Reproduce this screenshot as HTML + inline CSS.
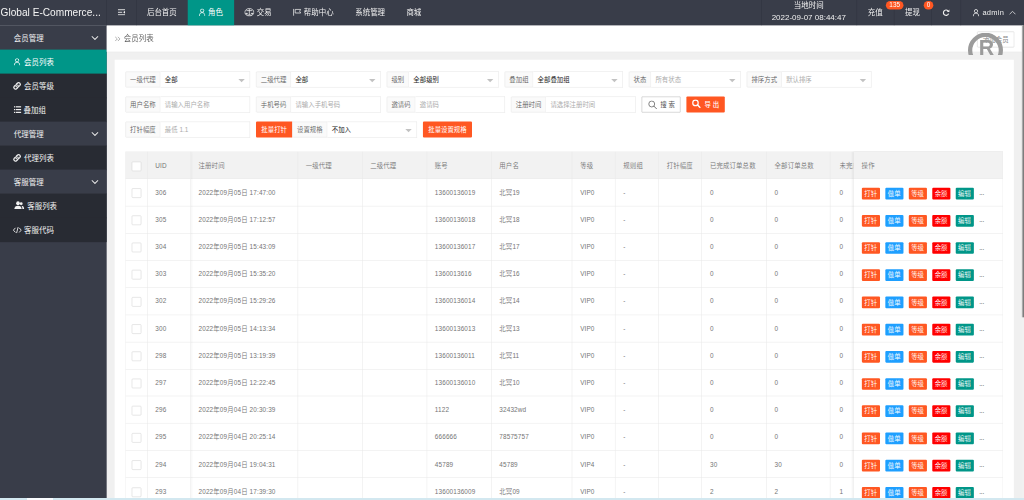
<!DOCTYPE html><html lang="zh-CN"><head><meta charset="utf-8"><title>会员列表</title><style>
*{box-sizing:border-box;margin:0;padding:0}
html,body{width:1024px;height:500px;overflow:hidden;background:#f0f0f0}
body{font-family:"Liberation Sans","Noto Sans CJK SC",sans-serif;position:relative}
#stage{position:absolute;left:0;top:0;width:1920px;height:938px;transform-origin:0 0;transform:scale(0.5333333);overflow:hidden}
#page{position:absolute;left:0;top:-2.75px;width:1920px;height:960px;font-size:14px;color:#666}
.abs{position:absolute}
svg{display:block}
#hdr{position:absolute;left:0;top:0;width:1920px;height:51px;background:#393d49;color:#fff}
#logo{position:absolute;left:1px;top:0;height:50px;line-height:54px;font-size:19px;color:#f4f4f4;white-space:nowrap}
.nav{position:absolute;top:0;height:51px;line-height:54px;font-size:14px;color:#f0f0f0;white-space:nowrap;text-align:center}
.nav .ic{display:inline-block;vertical-align:middle;margin-right:5px;position:relative;top:-3px}
.vline{position:absolute;top:0;width:1px;height:51px;background:#30343f}
.badge{position:absolute;top:5px;height:16px;line-height:16px;border-radius:8px;background:#ff5722;color:#fff;font-size:12px;text-align:center}
#side{position:absolute;left:0;top:51px;width:200px;height:910px;background:#393d49}
.si{position:absolute;left:0;width:200px;height:45.6px;line-height:45px;font-size:14px;color:#f2f2f2;white-space:nowrap}
.si.p{background:#393d49}
.si.ch{background:#282b33}
.si.on{background:#009688;color:#fff}
.si .t{position:absolute;top:0.5px}
.si .ic{position:absolute}
.si .chev{position:absolute;left:171px;top:18.5px;color:#ececec}
#crumb{position:absolute;left:200px;top:51px;width:1716px;height:49px;background:#fff;box-shadow:0 1px 2px rgba(0,0,0,.06)}
#card{position:absolute;left:215px;top:115px;width:1686px;height:900px;background:#fff}
.grp{position:absolute;height:30px;font-size:12px}
.lab{position:absolute;left:0;top:0;height:30px;line-height:30px;border:1px solid #e6e6e6;background:#fafafa;color:#5e5e5e;font-weight:350;text-align:center;border-radius:2px 0 0 2px}
.inp{position:absolute;top:0;height:30px;line-height:30px;border:1px solid #e6e6e6;border-left:none;background:#fff;padding-left:8px;color:#222;white-space:nowrap}
.inp.ph{color:#ababab}
.tri{position:absolute;right:9px;top:13px;width:0;height:0;border:6px solid transparent;border-top-color:#c2c2c2}
.btn{position:absolute;height:30px;line-height:30px;font-size:12px;color:#fff;background:#ff5722;text-align:center;border-radius:2px;white-space:nowrap}
.btn.w{background:#fff;border:1px solid #b8b8b8;color:#555;line-height:28px;border-radius:1px}
#tbl{position:absolute;left:235px;top:287px;width:1646px;height:700px;overflow:hidden;font-size:12px;color:#757575;font-weight:350}
.hrow{position:absolute;left:0;top:0;width:1646px;height:51px;background:#f2f2f2;border-top:1px solid #e6e6e6;border-bottom:1px solid #e6e6e6}
.hl{position:absolute;left:0;width:1646px;height:1px;background:#e9e9e9}
.vl{position:absolute;top:0;width:1px;height:700px;background:#e9e9e9}
.c{position:absolute;white-space:nowrap;line-height:51px;height:50px;letter-spacing:0.25px}
.cb{position:absolute;width:18px;height:18px;border:1px solid #d2d2d2;background:#fff;border-radius:2px}
.xs{position:absolute;height:22px;line-height:22px;width:34px;text-align:center;color:#fff;font-size:12px;border-radius:2px}
</style></head><body><div id="stage"><div id="page">
<div id="side"></div>
<div class="si p" style="top:51px"><span class="t" style="left:26px;top:0.5px">会员管理</span><svg class="chev" width="14" height="8" viewBox="0 0 14 8"><path d="M1 1 L7 7 L13 1" fill="none" stroke="currentColor" stroke-width="1.9"/></svg></div>
<div class="si ch on" style="top:96px"><svg class="ic" style="left:26px;top:16px" width="12" height="14" viewBox="0 0 12 14"><circle cx="6" cy="3.9" r="3.1" fill="none" stroke="currentColor" stroke-width="1.5"/><path d="M0.9 13.8 C0.9 9.4 3 7.6 6 7.6 S11.1 9.4 11.1 13.8" fill="none" stroke="currentColor" stroke-width="1.5"/></svg><span class="t" style="left:45px">会员列表</span></div>
<div class="si ch" style="top:141px"><svg class="ic" style="left:24px;top:15px" width="16" height="16" viewBox="0 0 15 15"><g fill="none" stroke="currentColor" stroke-width="2.2" stroke-linecap="round"><path d="M6.2 8.8 a3 3 0 0 1 0-4.2 l2.2-2.2 a3 3 0 0 1 4.2 4.2 l-1.2 1.2"/><path d="M8.8 6.2 a3 3 0 0 1 0 4.2 l-2.2 2.2 a3 3 0 0 1-4.2-4.2 l1.2-1.2"/></g></svg><span class="t" style="left:45px">会员等级</span></div>
<div class="si ch" style="top:186px"><svg class="ic" style="left:26px;top:15px" width="14" height="15" viewBox="0 0 14 15"><g fill="currentColor"><rect x="0" y="1.2" width="2.4" height="2.2"/><rect x="3.6" y="1.2" width="10.4" height="2.2"/><rect x="0" y="6.4" width="2.4" height="2.2"/><rect x="3.6" y="6.4" width="10.4" height="2.2"/><rect x="0" y="11.6" width="2.4" height="2.2"/><rect x="3.6" y="11.6" width="10.4" height="2.2"/></g></svg><span class="t" style="left:44px">叠加组</span></div>
<div class="si p" style="top:231px"><span class="t" style="left:26px;top:0.5px">代理管理</span><svg class="chev" width="14" height="8" viewBox="0 0 14 8"><path d="M1 1 L7 7 L13 1" fill="none" stroke="currentColor" stroke-width="1.9"/></svg></div>
<div class="si ch" style="top:276px"><svg class="ic" style="left:24px;top:15px" width="16" height="16" viewBox="0 0 15 15"><g fill="none" stroke="currentColor" stroke-width="2.2" stroke-linecap="round"><path d="M6.2 8.8 a3 3 0 0 1 0-4.2 l2.2-2.2 a3 3 0 0 1 4.2 4.2 l-1.2 1.2"/><path d="M8.8 6.2 a3 3 0 0 1 0 4.2 l-2.2 2.2 a3 3 0 0 1-4.2-4.2 l1.2-1.2"/></g></svg><span class="t" style="left:45px">代理列表</span></div>
<div class="si p" style="top:321px"><span class="t" style="left:26px;top:0.5px">客服管理</span><svg class="chev" width="14" height="8" viewBox="0 0 14 8"><path d="M1 1 L7 7 L13 1" fill="none" stroke="currentColor" stroke-width="1.9"/></svg></div>
<div class="si ch" style="top:366px"><svg class="ic" style="left:26px;top:14px" width="20" height="16" viewBox="0 0 18 14" preserveAspectRatio="none"><g fill="currentColor"><circle cx="7" cy="3.6" r="3.1"/><path d="M0.8 13 C0.8 9.5 3.4 7.6 7 7.6 S13.2 9.5 13.2 13 Z"/><circle cx="12.4" cy="4.2" r="2.4"/><path d="M12.4 7.6 C15.6 7.6 17.4 9.6 17.4 13 L14.4 13 C14.4 10.6 13.8 8.8 12.4 7.6Z"/></g></svg><span class="t" style="left:51px">客服列表</span></div>
<div class="si ch" style="top:411px"><svg class="ic" style="left:24px;top:17px" width="17" height="13" viewBox="0 0 15 12" preserveAspectRatio="none"><g fill="none" stroke="currentColor" stroke-width="1.5" stroke-linecap="round" stroke-linejoin="round"><path d="M4 2.5 L1 6 L4 9.5"/><path d="M11 2.5 L14 6 L11 9.5"/><path d="M8.6 1.5 L6.4 10.5"/></g></svg><span class="t" style="left:45px">客服代码</span></div>
<div id="hdr">
<div id="logo">Global E-Commerce...</div>
<div class="abs" style="left:221px;top:20px;color:#f0f0f0"><svg class="ic" width="13.5" height="12" viewBox="0 0 15 13" preserveAspectRatio="none"><g fill="currentColor"><rect x="0" y="0.5" width="15" height="1.8"/><rect x="0" y="5.6" width="9" height="1.8"/><rect x="0" y="10.7" width="15" height="1.8"/><path d="M15 3.6 L11 6.5 L15 9.4Z"/></g></svg></div>
<div class="nav" style="left:255px;width:97px;">后台首页</div>
<div class="nav" style="left:352px;width:87px;background:#009688;color:#fff"><svg class="ic" width="12" height="14" viewBox="0 0 12 14"><circle cx="6" cy="3.9" r="3.1" fill="none" stroke="currentColor" stroke-width="1.5"/><path d="M0.9 13.8 C0.9 9.4 3 7.6 6 7.6 S11.1 9.4 11.1 13.8" fill="none" stroke="currentColor" stroke-width="1.5"/></svg>角色</div>
<div class="nav" style="left:440px;width:87px;"><svg class="ic" width="19" height="16" viewBox="0 0 17 15" preserveAspectRatio="none"><g fill="none" stroke="currentColor" stroke-width="1.3"><ellipse cx="8.5" cy="7.5" rx="7.6" ry="6.6"/><path d="M8.5 1.5 V12.5 M3.5 4.6 H13.5 M5 12.4 H12"/><path d="M2.2 9.2 a1.6 1.6 0 0 0 3.2 0 Z M11.6 9.2 a1.6 1.6 0 0 0 3.2 0 Z" fill="currentColor" stroke-width="0.8"/></g></svg>交易</div>
<div class="nav" style="left:527px;width:120px;"><svg class="ic" width="16" height="14" viewBox="0 0 16 14"><g fill="none" stroke="currentColor" stroke-width="1.4"><path d="M1.5 0.5 V13.5"/><path d="M4.5 1.6 H14.8 L12.8 5 L14.8 8.4 H4.5 Z"/></g></svg>帮助中心</div>
<div class="nav" style="left:646px;width:96px;">系统管理</div>
<div class="nav" style="left:742px;width:68px;">商城</div>
<div class="vline" style="left:199px"></div>
<div class="vline" style="left:255px"></div>
<div class="vline" style="left:1427px"></div>
<div class="vline" style="left:1606px"></div>
<div class="vline" style="left:1676px"></div>
<div class="vline" style="left:1746px"></div>
<div class="vline" style="left:1801px"></div>
<div class="nav" style="left:1427px;width:179px;line-height:24px;top:1px;height:24px">当地时间</div>
<div class="nav" style="left:1427px;width:179px;line-height:24px;top:24px;height:24px;font-size:15px">2022-09-07 08:44:47</div>
<div class="nav" style="left:1606px;width:70px;">充值</div>
<div class="nav" style="left:1676px;width:70px;">提现</div>
<div class="abs" style="left:1767px;top:19.5px;color:#f0f0f0"><svg class="ic" width="14" height="14" viewBox="0 0 14 14"><path d="M11.6 8.6 A5 5 0 1 1 10.4 3.2" fill="none" stroke="currentColor" stroke-width="2.2"/><path d="M8.2 5.6 L13.2 5.6 L13.2 0.6 Z" fill="currentColor"/></svg></div>
<div class="abs" style="left:1824px;top:19.5px;color:#f0f0f0"><svg class="ic" width="12" height="14" viewBox="0 0 12 14"><circle cx="6" cy="3.9" r="3.1" fill="none" stroke="currentColor" stroke-width="1.5"/><path d="M0.9 13.8 C0.9 9.4 3 7.6 6 7.6 S11.1 9.4 11.1 13.8" fill="none" stroke="currentColor" stroke-width="1.5"/></svg></div>
<div class="nav" style="left:1842px;letter-spacing:0.5px">admin</div>
<div class="abs" style="left:1892px;top:23px;color:#f0f0f0"><svg class="chevup" width="13" height="8" viewBox="0 0 14 8"><path d="M1 7 L7 1 L13 7" fill="none" stroke="currentColor" stroke-width="1.5"/></svg></div>
<div class="badge" style="left:1661px;width:33px">135</div>
<div class="badge" style="left:1732px;width:18px">0</div>
</div>
<div id="crumb">
<div class="abs" style="left:15px;top:19.5px;color:#777"><svg class="ic" width="11" height="10" viewBox="0 0 11 10"><path d="M1 1 L5 5 L1 9 M6 1 L10 5 L6 9" fill="none" stroke="currentColor" stroke-width="1.1"/></svg></div>
<div class="abs" style="left:32px;top:0;line-height:48px;font-size:14px;color:#666">会员列表</div>
<div class="abs" style="left:1632px;top:11px;width:70px;height:30px;line-height:29px;border:1px solid #d2d2d2;border-radius:2px;font-size:12px;color:#888;text-align:center;background:#fff">添加会员</div>
</div>
<div class="abs" style="left:1805px;top:55px;width:90px;height:51px;overflow:hidden"><svg width="90" height="90" viewBox="0 0 90 90"><circle cx="42.8" cy="42.4" r="28.8" fill="none" stroke="#9b9b9b" stroke-width="8"/><text x="44.5" y="52" text-anchor="middle" font-family="Liberation Sans, sans-serif" font-weight="bold" font-size="40" fill="#9b9b9b">R</text></svg></div>
<div id="card"></div>
<div class="grp" style="left:235px;top:136.5px;width:234px"><div class="lab" style="width:66px">一级代理</div><div class="inp" style="left:66px;width:168px">全部<i class="tri"></i></div></div>
<div class="grp" style="left:480px;top:136.5px;width:234px"><div class="lab" style="width:66px">二级代理</div><div class="inp" style="left:66px;width:168px">全部<i class="tri"></i></div></div>
<div class="grp" style="left:725px;top:136.5px;width:210px"><div class="lab" style="width:42px">级别</div><div class="inp" style="left:42px;width:168px">全部级别<i class="tri"></i></div></div>
<div class="grp" style="left:946px;top:136.5px;width:222px"><div class="lab" style="width:54px">叠加组</div><div class="inp" style="left:54px;width:168px">全部叠加组<i class="tri"></i></div></div>
<div class="grp" style="left:1179px;top:136.5px;width:210px"><div class="lab" style="width:42px">状态</div><div class="inp ph" style="left:42px;width:168px">所有状态<i class="tri"></i></div></div>
<div class="grp" style="left:1400px;top:136.5px;width:234px"><div class="lab" style="width:66px">排序方式</div><div class="inp ph" style="left:66px;width:168px">默认排序<i class="tri"></i></div></div>
<div class="grp" style="left:235px;top:183.5px;width:234px"><div class="lab" style="width:66px">用户名称</div><div class="inp ph" style="left:66px;width:168px">请输入用户名称</div></div>
<div class="grp" style="left:480px;top:183.5px;width:234px"><div class="lab" style="width:66px">手机号码</div><div class="inp ph" style="left:66px;width:168px">请输入手机号码</div></div>
<div class="grp" style="left:725px;top:183.5px;width:222px"><div class="lab" style="width:54px">邀请码</div><div class="inp ph" style="left:54px;width:168px">邀请码</div></div>
<div class="grp" style="left:958px;top:183.5px;width:234px"><div class="lab" style="width:66px">注册时间</div><div class="inp ph" style="left:66px;width:168px">请选择注册时间</div></div>
<div class="btn w" style="left:1203px;top:183.5px;width:73px"><svg class="ic" style="position:absolute;left:10.5px;top:6.5px;color:#666" width="17" height="17" viewBox="0 0 16 16"><circle cx="6.6" cy="6.6" r="5.2" fill="none" stroke="currentColor" stroke-width="1.4"/><path d="M10.4 10.4 L15 15" stroke="currentColor" stroke-width="1.6" stroke-linecap="round"/></svg><span style="position:absolute;left:34px;letter-spacing:3.5px;top:1px">搜索</span></div>
<div class="btn" style="left:1287px;top:183.5px;width:72px"><svg class="ic" style="position:absolute;left:10px;top:5px" width="17" height="17" viewBox="0 0 16 16"><circle cx="6.6" cy="6.6" r="4.8" fill="none" stroke="currentColor" stroke-width="2.2"/><path d="M10.4 10.4 L14.6 14.6" stroke="currentColor" stroke-width="2.6" stroke-linecap="round"/></svg><span style="position:absolute;left:34px;letter-spacing:3.5px;top:0.5px;font-weight:500">导出</span></div>
<div class="grp" style="left:235px;top:230.5px;width:234px"><div class="lab" style="width:66px">打针幅度</div><div class="inp ph" style="left:66px;width:168px">最低 1.1</div></div>
<div class="btn" style="left:480px;top:230.5px;width:68px;border-radius:2px 0 0 2px">批量打针</div>
<div class="grp" style="left:548px;top:230.5px;width:234px"><div class="lab" style="width:66px">设置规格</div><div class="inp" style="left:66px;width:168px">不加入<i class="tri"></i></div></div>
<div class="btn" style="left:793px;top:230.5px;width:92px">批量设置规格</div>
<div id="tbl">
<div class="hrow"></div>
<div class="hl" style="top:101.7px"></div>
<div class="hl" style="top:152.63px"></div>
<div class="hl" style="top:203.56px"></div>
<div class="hl" style="top:254.49px"></div>
<div class="hl" style="top:305.42px"></div>
<div class="hl" style="top:356.35px"></div>
<div class="hl" style="top:407.28px"></div>
<div class="hl" style="top:458.21px"></div>
<div class="hl" style="top:509.14px"></div>
<div class="hl" style="top:560.07px"></div>
<div class="hl" style="top:611px"></div>
<div class="hl" style="top:661.93px"></div>
<div class="hl" style="top:712.86px"></div>
<div class="vl" style="left:40.5px"></div>
<div class="vl" style="left:121.5px"></div>
<div class="vl" style="left:322.5px"></div>
<div class="vl" style="left:443.5px"></div>
<div class="vl" style="left:564.5px"></div>
<div class="vl" style="left:685.5px"></div>
<div class="vl" style="left:837px"></div>
<div class="vl" style="left:918px"></div>
<div class="vl" style="left:999.2px"></div>
<div class="vl" style="left:1080.4px"></div>
<div class="vl" style="left:1201.6px"></div>
<div class="vl" style="left:1321.2px"></div>
<div class="vl" style="left:0"></div>
<div class="cb" style="left:11.5px;top:18.5px"></div>
<div class="c" style="left:56.25px;top:2px;">UID</div>
<div class="c" style="left:137.25px;top:2px;">注册时间</div>
<div class="c" style="left:338.25px;top:2px;">一级代理</div>
<div class="c" style="left:459.25px;top:2px;">二级代理</div>
<div class="c" style="left:580.25px;top:2px;">账号</div>
<div class="c" style="left:701.25px;top:2px;">用户名</div>
<div class="c" style="left:852.75px;top:2px;">等级</div>
<div class="c" style="left:933.75px;top:2px;">规则组</div>
<div class="c" style="left:1014.95px;top:2px;">打针幅度</div>
<div class="c" style="left:1096.15px;top:2px;">已完成订单总数</div>
<div class="c" style="left:1217.35px;top:2px;">全部订单总数</div>
<div class="c" style="left:1336.95px;top:2px;width:26px;overflow:hidden;margin-left:2px;">未完成订单</div>
<div class="cb" style="left:11.5px;top:68.5px"></div>
<div class="c" style="left:56.25px;top:52px">306</div>
<div class="c" style="left:137.25px;top:52px">2022年09月05日 17:47:00</div>
<div class="c" style="left:580.25px;top:52px">13600136019</div>
<div class="c" style="left:701.25px;top:52px">北冥19</div>
<div class="c" style="left:852.75px;top:52px">VIP0</div>
<div class="c" style="left:933.75px;top:52px">-</div>
<div class="c" style="left:1096.15px;top:52px">0</div>
<div class="c" style="left:1217.35px;top:52px">0</div>
<div class="c" style="left:1338.95px;top:52px">0</div>
<div class="cb" style="left:11.5px;top:119.5px"></div>
<div class="c" style="left:56.25px;top:103px">305</div>
<div class="c" style="left:137.25px;top:103px">2022年09月05日 17:12:57</div>
<div class="c" style="left:580.25px;top:103px">13600136018</div>
<div class="c" style="left:701.25px;top:103px">北冥18</div>
<div class="c" style="left:852.75px;top:103px">VIP0</div>
<div class="c" style="left:933.75px;top:103px">-</div>
<div class="c" style="left:1096.15px;top:103px">0</div>
<div class="c" style="left:1217.35px;top:103px">0</div>
<div class="c" style="left:1338.95px;top:103px">0</div>
<div class="cb" style="left:11.5px;top:170.5px"></div>
<div class="c" style="left:56.25px;top:154px">304</div>
<div class="c" style="left:137.25px;top:154px">2022年09月05日 15:43:09</div>
<div class="c" style="left:580.25px;top:154px">13600136017</div>
<div class="c" style="left:701.25px;top:154px">北冥17</div>
<div class="c" style="left:852.75px;top:154px">VIP0</div>
<div class="c" style="left:933.75px;top:154px">-</div>
<div class="c" style="left:1096.15px;top:154px">0</div>
<div class="c" style="left:1217.35px;top:154px">0</div>
<div class="c" style="left:1338.95px;top:154px">0</div>
<div class="cb" style="left:11.5px;top:221.5px"></div>
<div class="c" style="left:56.25px;top:205px">303</div>
<div class="c" style="left:137.25px;top:205px">2022年09月05日 15:35:20</div>
<div class="c" style="left:580.25px;top:205px">1360013616</div>
<div class="c" style="left:701.25px;top:205px">北冥16</div>
<div class="c" style="left:852.75px;top:205px">VIP0</div>
<div class="c" style="left:933.75px;top:205px">-</div>
<div class="c" style="left:1096.15px;top:205px">0</div>
<div class="c" style="left:1217.35px;top:205px">0</div>
<div class="c" style="left:1338.95px;top:205px">0</div>
<div class="cb" style="left:11.5px;top:272.5px"></div>
<div class="c" style="left:56.25px;top:256px">302</div>
<div class="c" style="left:137.25px;top:256px">2022年09月05日 15:29:26</div>
<div class="c" style="left:580.25px;top:256px">13600136014</div>
<div class="c" style="left:701.25px;top:256px">北冥14</div>
<div class="c" style="left:852.75px;top:256px">VIP0</div>
<div class="c" style="left:933.75px;top:256px">-</div>
<div class="c" style="left:1096.15px;top:256px">0</div>
<div class="c" style="left:1217.35px;top:256px">0</div>
<div class="c" style="left:1338.95px;top:256px">0</div>
<div class="cb" style="left:11.5px;top:323.5px"></div>
<div class="c" style="left:56.25px;top:307px">300</div>
<div class="c" style="left:137.25px;top:307px">2022年09月05日 14:13:34</div>
<div class="c" style="left:580.25px;top:307px">13600136013</div>
<div class="c" style="left:701.25px;top:307px">北冥13</div>
<div class="c" style="left:852.75px;top:307px">VIP0</div>
<div class="c" style="left:933.75px;top:307px">-</div>
<div class="c" style="left:1096.15px;top:307px">0</div>
<div class="c" style="left:1217.35px;top:307px">0</div>
<div class="c" style="left:1338.95px;top:307px">0</div>
<div class="cb" style="left:11.5px;top:374.5px"></div>
<div class="c" style="left:56.25px;top:358px">298</div>
<div class="c" style="left:137.25px;top:358px">2022年09月05日 13:19:39</div>
<div class="c" style="left:580.25px;top:358px">13600136011</div>
<div class="c" style="left:701.25px;top:358px">北冥11</div>
<div class="c" style="left:852.75px;top:358px">VIP0</div>
<div class="c" style="left:933.75px;top:358px">-</div>
<div class="c" style="left:1096.15px;top:358px">0</div>
<div class="c" style="left:1217.35px;top:358px">0</div>
<div class="c" style="left:1338.95px;top:358px">0</div>
<div class="cb" style="left:11.5px;top:425.5px"></div>
<div class="c" style="left:56.25px;top:409px">297</div>
<div class="c" style="left:137.25px;top:409px">2022年09月05日 12:22:45</div>
<div class="c" style="left:580.25px;top:409px">13600136010</div>
<div class="c" style="left:701.25px;top:409px">北冥10</div>
<div class="c" style="left:852.75px;top:409px">VIP0</div>
<div class="c" style="left:933.75px;top:409px">-</div>
<div class="c" style="left:1096.15px;top:409px">0</div>
<div class="c" style="left:1217.35px;top:409px">0</div>
<div class="c" style="left:1338.95px;top:409px">0</div>
<div class="cb" style="left:11.5px;top:476.5px"></div>
<div class="c" style="left:56.25px;top:460px">296</div>
<div class="c" style="left:137.25px;top:460px">2022年09月04日 20:30:39</div>
<div class="c" style="left:580.25px;top:460px">1122</div>
<div class="c" style="left:701.25px;top:460px">32432wd</div>
<div class="c" style="left:852.75px;top:460px">VIP0</div>
<div class="c" style="left:933.75px;top:460px">-</div>
<div class="c" style="left:1096.15px;top:460px">0</div>
<div class="c" style="left:1217.35px;top:460px">0</div>
<div class="c" style="left:1338.95px;top:460px">0</div>
<div class="cb" style="left:11.5px;top:527.5px"></div>
<div class="c" style="left:56.25px;top:511px">295</div>
<div class="c" style="left:137.25px;top:511px">2022年09月04日 20:25:14</div>
<div class="c" style="left:580.25px;top:511px">666666</div>
<div class="c" style="left:701.25px;top:511px">78575757</div>
<div class="c" style="left:852.75px;top:511px">VIP0</div>
<div class="c" style="left:933.75px;top:511px">-</div>
<div class="c" style="left:1096.15px;top:511px">0</div>
<div class="c" style="left:1217.35px;top:511px">0</div>
<div class="c" style="left:1338.95px;top:511px">0</div>
<div class="cb" style="left:11.5px;top:578.5px"></div>
<div class="c" style="left:56.25px;top:562px">294</div>
<div class="c" style="left:137.25px;top:562px">2022年09月04日 19:04:31</div>
<div class="c" style="left:580.25px;top:562px">45789</div>
<div class="c" style="left:701.25px;top:562px">45789</div>
<div class="c" style="left:852.75px;top:562px">VIP4</div>
<div class="c" style="left:933.75px;top:562px">-</div>
<div class="c" style="left:1096.15px;top:562px">30</div>
<div class="c" style="left:1217.35px;top:562px">30</div>
<div class="c" style="left:1338.95px;top:562px">0</div>
<div class="cb" style="left:11.5px;top:629.5px"></div>
<div class="c" style="left:56.25px;top:613px">293</div>
<div class="c" style="left:137.25px;top:613px">2022年09月04日 17:39:30</div>
<div class="c" style="left:580.25px;top:613px">13600136009</div>
<div class="c" style="left:701.25px;top:613px">北冥09</div>
<div class="c" style="left:852.75px;top:613px">VIP0</div>
<div class="c" style="left:933.75px;top:613px">-</div>
<div class="c" style="left:1096.15px;top:613px">2</div>
<div class="c" style="left:1217.35px;top:613px">2</div>
<div class="c" style="left:1338.95px;top:613px">1</div>
<div class="abs" style="left:1365.5px;top:0;width:280.5px;height:700px;background:#fff;box-shadow:-2px 0 5px rgba(0,0,0,.10)"></div>
<div class="abs" style="left:1365.5px;top:0;width:280.5px;height:51px;background:#f2f2f2;border-top:1px solid #e6e6e6;border-bottom:1px solid #e6e6e6"></div>
<div class="c" style="left:1380.5px;top:2px">操作</div>
<div class="vl" style="left:1645px"></div>
<div class="hl" style="left:1365.5px;width:280.5px;top:101.7px"></div>
<div class="xs" style="left:1380.5px;top:67.3px;background:#ff5722">打针</div>
<div class="xs" style="left:1424.5px;top:67.3px;background:#1e9fff">做单</div>
<div class="xs" style="left:1468.5px;top:67.3px;background:#ff5722">等级</div>
<div class="xs" style="left:1512.5px;top:67.3px;background:#f00">余额</div>
<div class="xs" style="left:1556.5px;top:67.3px;background:#009688">编辑</div>
<div class="c" style="left:1601px;top:53px;color:#444;letter-spacing:-0.2px;font-weight:400">...</div>
<div class="hl" style="left:1365.5px;width:280.5px;top:152.63px"></div>
<div class="xs" style="left:1380.5px;top:118.3px;background:#ff5722">打针</div>
<div class="xs" style="left:1424.5px;top:118.3px;background:#1e9fff">做单</div>
<div class="xs" style="left:1468.5px;top:118.3px;background:#ff5722">等级</div>
<div class="xs" style="left:1512.5px;top:118.3px;background:#f00">余额</div>
<div class="xs" style="left:1556.5px;top:118.3px;background:#009688">编辑</div>
<div class="c" style="left:1601px;top:104px;color:#444;letter-spacing:-0.2px;font-weight:400">...</div>
<div class="hl" style="left:1365.5px;width:280.5px;top:203.56px"></div>
<div class="xs" style="left:1380.5px;top:169.3px;background:#ff5722">打针</div>
<div class="xs" style="left:1424.5px;top:169.3px;background:#1e9fff">做单</div>
<div class="xs" style="left:1468.5px;top:169.3px;background:#ff5722">等级</div>
<div class="xs" style="left:1512.5px;top:169.3px;background:#f00">余额</div>
<div class="xs" style="left:1556.5px;top:169.3px;background:#009688">编辑</div>
<div class="c" style="left:1601px;top:155px;color:#444;letter-spacing:-0.2px;font-weight:400">...</div>
<div class="hl" style="left:1365.5px;width:280.5px;top:254.49px"></div>
<div class="xs" style="left:1380.5px;top:220.3px;background:#ff5722">打针</div>
<div class="xs" style="left:1424.5px;top:220.3px;background:#1e9fff">做单</div>
<div class="xs" style="left:1468.5px;top:220.3px;background:#ff5722">等级</div>
<div class="xs" style="left:1512.5px;top:220.3px;background:#f00">余额</div>
<div class="xs" style="left:1556.5px;top:220.3px;background:#009688">编辑</div>
<div class="c" style="left:1601px;top:206px;color:#444;letter-spacing:-0.2px;font-weight:400">...</div>
<div class="hl" style="left:1365.5px;width:280.5px;top:305.42px"></div>
<div class="xs" style="left:1380.5px;top:271.3px;background:#ff5722">打针</div>
<div class="xs" style="left:1424.5px;top:271.3px;background:#1e9fff">做单</div>
<div class="xs" style="left:1468.5px;top:271.3px;background:#ff5722">等级</div>
<div class="xs" style="left:1512.5px;top:271.3px;background:#f00">余额</div>
<div class="xs" style="left:1556.5px;top:271.3px;background:#009688">编辑</div>
<div class="c" style="left:1601px;top:257px;color:#444;letter-spacing:-0.2px;font-weight:400">...</div>
<div class="hl" style="left:1365.5px;width:280.5px;top:356.35px"></div>
<div class="xs" style="left:1380.5px;top:322.3px;background:#ff5722">打针</div>
<div class="xs" style="left:1424.5px;top:322.3px;background:#1e9fff">做单</div>
<div class="xs" style="left:1468.5px;top:322.3px;background:#ff5722">等级</div>
<div class="xs" style="left:1512.5px;top:322.3px;background:#f00">余额</div>
<div class="xs" style="left:1556.5px;top:322.3px;background:#009688">编辑</div>
<div class="c" style="left:1601px;top:308px;color:#444;letter-spacing:-0.2px;font-weight:400">...</div>
<div class="hl" style="left:1365.5px;width:280.5px;top:407.28px"></div>
<div class="xs" style="left:1380.5px;top:373.3px;background:#ff5722">打针</div>
<div class="xs" style="left:1424.5px;top:373.3px;background:#1e9fff">做单</div>
<div class="xs" style="left:1468.5px;top:373.3px;background:#ff5722">等级</div>
<div class="xs" style="left:1512.5px;top:373.3px;background:#f00">余额</div>
<div class="xs" style="left:1556.5px;top:373.3px;background:#009688">编辑</div>
<div class="c" style="left:1601px;top:359px;color:#444;letter-spacing:-0.2px;font-weight:400">...</div>
<div class="hl" style="left:1365.5px;width:280.5px;top:458.21px"></div>
<div class="xs" style="left:1380.5px;top:424.3px;background:#ff5722">打针</div>
<div class="xs" style="left:1424.5px;top:424.3px;background:#1e9fff">做单</div>
<div class="xs" style="left:1468.5px;top:424.3px;background:#ff5722">等级</div>
<div class="xs" style="left:1512.5px;top:424.3px;background:#f00">余额</div>
<div class="xs" style="left:1556.5px;top:424.3px;background:#009688">编辑</div>
<div class="c" style="left:1601px;top:410px;color:#444;letter-spacing:-0.2px;font-weight:400">...</div>
<div class="hl" style="left:1365.5px;width:280.5px;top:509.14px"></div>
<div class="xs" style="left:1380.5px;top:475.3px;background:#ff5722">打针</div>
<div class="xs" style="left:1424.5px;top:475.3px;background:#1e9fff">做单</div>
<div class="xs" style="left:1468.5px;top:475.3px;background:#ff5722">等级</div>
<div class="xs" style="left:1512.5px;top:475.3px;background:#f00">余额</div>
<div class="xs" style="left:1556.5px;top:475.3px;background:#009688">编辑</div>
<div class="c" style="left:1601px;top:461px;color:#444;letter-spacing:-0.2px;font-weight:400">...</div>
<div class="hl" style="left:1365.5px;width:280.5px;top:560.07px"></div>
<div class="xs" style="left:1380.5px;top:526.3px;background:#ff5722">打针</div>
<div class="xs" style="left:1424.5px;top:526.3px;background:#1e9fff">做单</div>
<div class="xs" style="left:1468.5px;top:526.3px;background:#ff5722">等级</div>
<div class="xs" style="left:1512.5px;top:526.3px;background:#f00">余额</div>
<div class="xs" style="left:1556.5px;top:526.3px;background:#009688">编辑</div>
<div class="c" style="left:1601px;top:512px;color:#444;letter-spacing:-0.2px;font-weight:400">...</div>
<div class="hl" style="left:1365.5px;width:280.5px;top:611px"></div>
<div class="xs" style="left:1380.5px;top:577.3px;background:#ff5722">打针</div>
<div class="xs" style="left:1424.5px;top:577.3px;background:#1e9fff">做单</div>
<div class="xs" style="left:1468.5px;top:577.3px;background:#ff5722">等级</div>
<div class="xs" style="left:1512.5px;top:577.3px;background:#f00">余额</div>
<div class="xs" style="left:1556.5px;top:577.3px;background:#009688">编辑</div>
<div class="c" style="left:1601px;top:563px;color:#444;letter-spacing:-0.2px;font-weight:400">...</div>
<div class="hl" style="left:1365.5px;width:280.5px;top:661.93px"></div>
<div class="xs" style="left:1380.5px;top:628.3px;background:#ff5722">打针</div>
<div class="xs" style="left:1424.5px;top:628.3px;background:#1e9fff">做单</div>
<div class="xs" style="left:1468.5px;top:628.3px;background:#ff5722">等级</div>
<div class="xs" style="left:1512.5px;top:628.3px;background:#f00">余额</div>
<div class="xs" style="left:1556.5px;top:628.3px;background:#009688">编辑</div>
<div class="c" style="left:1601px;top:614px;color:#444;letter-spacing:-0.2px;font-weight:400">...</div>
<div class="abs" style="left:122px;top:0;width:1px;height:700px;box-shadow:2px 0 4px rgba(0,0,0,.10)"></div>
</div>
<div class="abs" style="left:1916px;top:50px;width:4px;height:900px;background:#f1f1f1"></div>
<div class="abs" style="left:1916.5px;top:50px;width:3.5px;height:548px;background:#6e6e6e"></div>
</div></div>
<div style="position:absolute;left:0;top:497.7px;width:1024px;height:2.3px;background:#d3e8f0"></div><div style="position:absolute;left:27px;top:497.7px;width:26px;height:2.3px;background:#fafdff"></div>
</body></html>
